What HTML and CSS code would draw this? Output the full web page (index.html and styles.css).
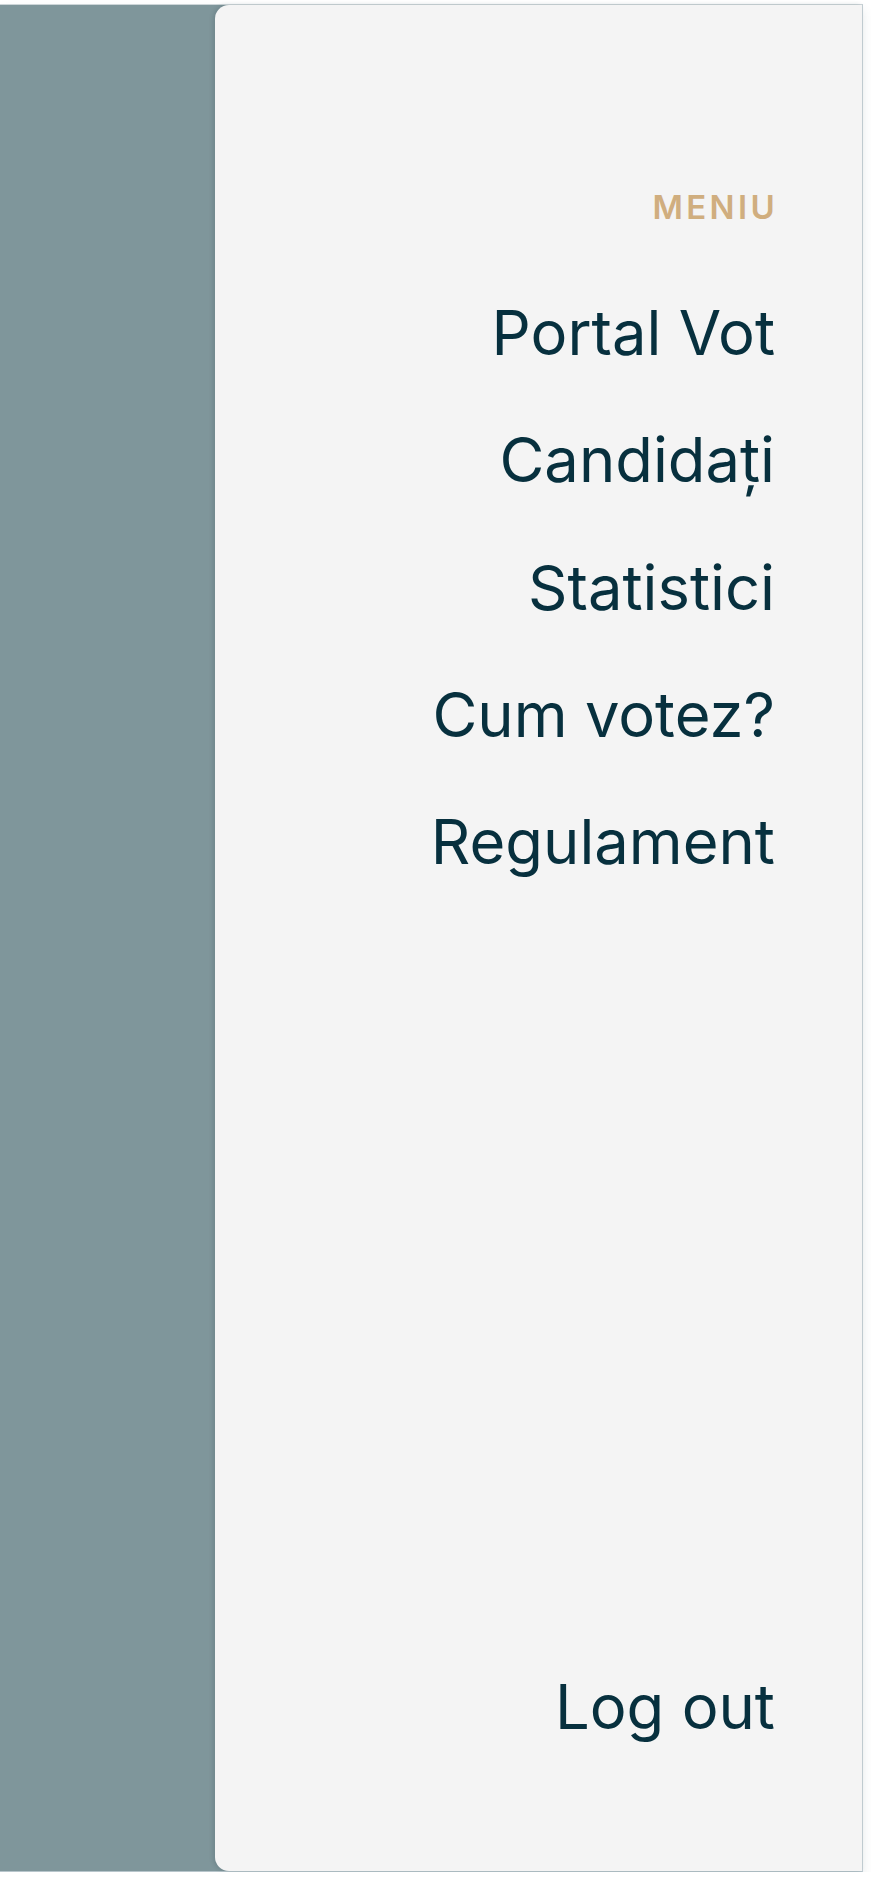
FILE: index.html
```html
<!DOCTYPE html>
<html lang="ro">
<head>
<meta charset="utf-8">
<title>Meniu</title>
<link rel="stylesheet" href="styles.css">
</head>
<body>
<div class="screen">
  <div class="backdrop"></div>
  <nav class="drawer">
    <div class="label">MENIU</div>
    <ul class="menu">
      <li><a href="#">Portal Vot</a></li>
      <li><a href="#">Candidați</a></li>
      <li><a href="#">Statistici</a></li>
      <li><a href="#">Cum votez?</a></li>
      <li><a href="#">Regulament</a></li>
    </ul>
    <a class="logout" href="#">Log out</a>
  </nav>
</div>
</body>
</html>
```

FILE: styles.css
```css
html, body {
  margin: 0;
  padding: 0;
  background: #ffffff;
}
body {
  font-family: Inter, "Noto Sans", sans-serif;
}
.screen {
  box-sizing: border-box;
  margin: 4px 8px 0 0;
  height: 1868px;
  display: flex;
  background: #7f969b;
  border-top: 1px solid #cdd5d8;
  border-right: 1px solid #c4cfd4;
  border-bottom: 1px solid #b7c5cb;
  box-shadow: 0 6px 10px rgba(60, 90, 100, 0.12);
}
.backdrop {
  width: 215px;
  flex: none;
}
.drawer {
  flex: 1;
  display: flex;
  flex-direction: column;
  align-items: flex-end;
  background: #f4f4f4;
  border-radius: 14px 0 0 14px;
  box-shadow: -2px 0 4px rgba(40, 60, 70, 0.18);
  padding: 182px 87px 101px 0;
}
.label {
  font-size: 33px;
  line-height: 40px;
  font-weight: 600;
  letter-spacing: 0.1em;
  color: #d0ae7f;
  margin-right: -3px;
}
.menu {
  list-style: none;
  margin: 42px 0 0 0;
  padding: 0;
  display: flex;
  flex-direction: column;
  align-items: flex-end;
}
.menu li {
  font-size: 61.5px;
  line-height: 127.3px;
}
.menu a, .logout {
  font-size: 61.5px;
  line-height: 127.3px;
  color: #07303e;
  text-decoration: none;
}
.logout {
  margin-top: auto;
}
```
